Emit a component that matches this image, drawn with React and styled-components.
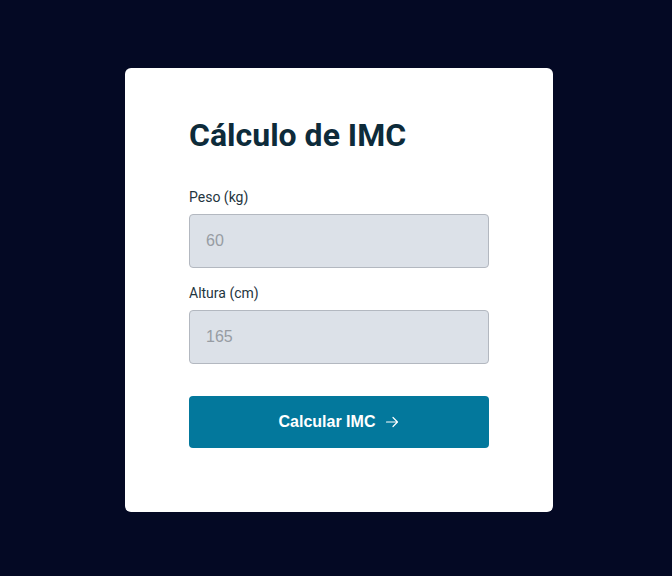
import React from 'react';
import styled, { createGlobalStyle } from 'styled-components';

const GlobalStyle = createGlobalStyle`
  * { box-sizing: border-box; }
  body {
    margin: 0;
    background: #040924;
    font-family: Roboto, "Liberation Sans", Arial, sans-serif;
  }
`;

const Page = styled.div`
  min-height: 100vh;
  padding: 4px 0 0 6px;
  display: flex;
  align-items: center;
  justify-content: center;
`;

const Card = styled.form`
  width: 428px;
  background: #ffffff;
  border-radius: 6px;
  padding: 48px 64px 64px;
  display: flex;
  flex-direction: column;
`;

const Title = styled.h1`
  margin: 0 0 34px;
  font-size: 32px;
  line-height: 38px;
  font-weight: 700;
  color: #0d2b3a;
`;

const Field = styled.div`
  display: flex;
  flex-direction: column;
  margin-bottom: ${p => p.$last ? '32px' : '16px'};
`;

const Label = styled.label`
  font-size: 14px;
  line-height: 18px;
  color: #1f3540;
  margin-bottom: 8px;
`;

const Input = styled.input`
  height: 54px;
  width: 100%;
  padding: 0 16px;
  border: 1px solid #b3b8c0;
  border-radius: 4px;
  background: #dce1e8;
  font-family: "Liberation Sans", Arial, sans-serif;
  font-size: 16px;
  color: #1f3540;
  outline: none;
  &::placeholder { color: #979ca3; }
`;

const Button = styled.button`
  height: 52px;
  width: 100%;
  border: none;
  border-radius: 4px;
  background: #03789c;
  color: #ffffff;
  font-family: "Liberation Sans", Arial, sans-serif;
  font-size: 16px;
  font-weight: 700;
  display: flex;
  align-items: center;
  justify-content: center;
  gap: 10px;
  cursor: pointer;
`;

const Arrow = () => (
  <svg width="14" height="14" viewBox="0 0 14 14" fill="none" stroke="#fff" strokeWidth="1.2" strokeLinecap="round" strokeLinejoin="round">
    <path d="M1.5 7h11M8 2.5 12.5 7 8 11.5" />
  </svg>
);

export default function App() {
  return (
    <Page>
      <GlobalStyle />
      <Card onSubmit={e => e.preventDefault()}>
        <Title>Cálculo de IMC</Title>
        <Field>
          <Label htmlFor="peso">Peso (kg)</Label>
          <Input id="peso" type="number" placeholder="60" />
        </Field>
        <Field $last>
          <Label htmlFor="altura">Altura (cm)</Label>
          <Input id="altura" type="number" placeholder="165" />
        </Field>
        <Button type="submit">
          Calcular IMC <Arrow />
        </Button>
      </Card>
    </Page>
  );
}
